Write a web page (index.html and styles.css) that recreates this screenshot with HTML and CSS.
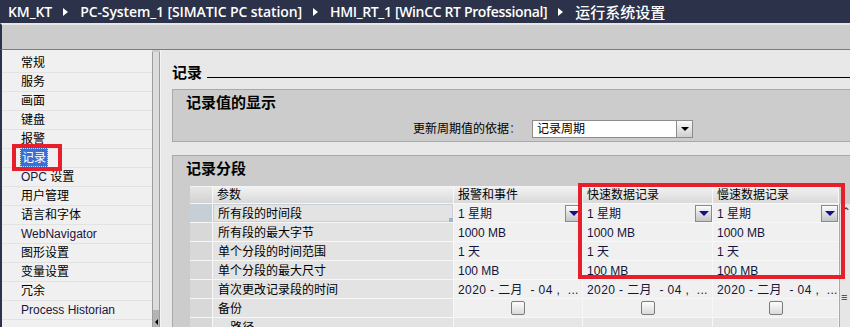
FILE: index.html
```html
<!DOCTYPE html>
<html lang="zh">
<head>
<meta charset="utf-8">
<title>运行系统设置</title>
<link rel="stylesheet" href="styles.css">
</head>
<body>
<div class="app">
  <header class="titlebar">
    <span>KM_KT</span><span class="crumb-sep"></span>
    <span>PC-System_1 [SIMATIC PC station]</span><span class="crumb-sep"></span>
    <span class="crumb-tight">HMI_RT_1 [WinCC RT Professional]</span><span class="crumb-sep"></span>
    <span class="cjk">运行系统设置</span>
  </header>
  <div class="toolbar"></div>
  <div class="workspace">
    <nav class="sidebar">
      <ul class="navlist">
        <li>常规</li>
        <li>服务</li>
        <li>画面</li>
        <li>键盘</li>
        <li>报警</li>
        <li class="selected"><span class="sel-label">记录</span></li>
        <li><span class="latin">OPC</span> 设置</li>
        <li>用户管理</li>
        <li>语言和字体</li>
        <li class="latin">WebNavigator</li>
        <li>图形设置</li>
        <li>变量设置</li>
        <li>冗余</li>
        <li class="latin">Process Historian</li>
      </ul>
    </nav>
    <div class="splitter">
      <div class="split-track"></div>
      <div class="split-thumb"><span class="split-arrow"></span></div>
    </div>
    <main class="main">
      <div class="heading">
        <h1 class="heading-title">记录</h1>
        <span class="heading-rule"></span>
      </div>

      <section class="panel panel-display">
        <h2 class="panel-title">记录值的显示</h2>
        <div class="field">
          <label class="field-label">更新周期值的依据<span class="colon">：</span></label>
          <div class="select">
            <span class="select-value">记录周期</span>
            <span class="select-btn"><span class="tri tri-black"></span></span>
          </div>
        </div>
      </section>

      <section class="panel panel-seg">
        <h2 class="panel-title">记录分段</h2>
        <div class="grid">
          <div class="hc corner"></div>
          <div class="hc">参数</div>
          <div class="hc">报警和事件</div>
          <div class="hc">快速数据记录</div>
          <div class="hc">慢速数据记录</div>
          <div class="hc-empty"></div>

          <div class="rh rh-sel"></div>
          <div class="pc focused">所有段的时间段<span class="focus-dot"></span></div>
          <div class="vc dd"><span class="val">1 星期</span><span class="dd-btn"><span class="tri tri-navy"></span></span></div>
          <div class="vc dd"><span class="val">1 星期</span><span class="dd-btn"><span class="tri tri-navy"></span></span></div>
          <div class="vc dd"><span class="val">1 星期</span><span class="dd-btn"><span class="tri tri-navy"></span></span></div>
          <div class="vscroll"><span class="vs-up">&#8963;</span><span class="vs-grip">&#8801;</span></div>

          <div class="rh"></div>
          <div class="pc">所有段的最大字节</div>
          <div class="vc">1000 MB</div>
          <div class="vc">1000 MB</div>
          <div class="vc">1000 MB</div>

          <div class="rh"></div>
          <div class="pc">单个分段的时间范围</div>
          <div class="vc">1 天</div>
          <div class="vc">1 天</div>
          <div class="vc">1 天</div>

          <div class="rh"></div>
          <div class="pc">单个分段的最大尺寸</div>
          <div class="vc">100 MB</div>
          <div class="vc">100 MB</div>
          <div class="vc">100 MB</div>

          <div class="rh"></div>
          <div class="pc">首次更改记录段的时间</div>
          <div class="vc date">2020 - 二月 &nbsp;- 04 , &nbsp;...</div>
          <div class="vc date">2020 - 二月 &nbsp;- 04 , &nbsp;...</div>
          <div class="vc date">2020 - 二月 &nbsp;- 04 , &nbsp;...</div>

          <div class="rh"></div>
          <div class="pc">备份</div>
          <div class="vc cb"><span class="checkbox"></span></div>
          <div class="vc cb"><span class="checkbox"></span></div>
          <div class="vc cb"><span class="checkbox"></span></div>

          <div class="rh"></div>
          <div class="pc sub">- 路径</div>
          <div class="vc sub-v"></div>
          <div class="vc sub-v"></div>
          <div class="vc sub-v"></div>
        </div>
      </section>
    </main>
  </div>

  <div class="mark mark-side"></div>
  <div class="mark mark-table"></div>
</div>
</body>
</html>
```

FILE: styles.css
```css
* { box-sizing: border-box; }

html, body {
  margin: 0;
  padding: 0;
}

body {
  width: 850px;
  height: 327px;
  overflow: hidden;
  background: #cccccc;
  font-family: "Liberation Sans", "Noto Sans CJK SC", sans-serif;
  font-size: 12px;
  color: #000;
}

.app {
  position: relative;
  width: 850px;
  height: 327px;
  display: flex;
  flex-direction: column;
}

/* ---------- title bar ---------- */
.titlebar {
  height: 23px;
  flex: none;
  background: #2b3249;
  color: #ffffff;
  display: flex;
  align-items: center;
  padding-left: 8px;
  font-family: "Open Sans", "Noto Sans CJK SC", sans-serif;
  font-size: 14px;
  font-weight: 600;
  letter-spacing: -0.1px;
  white-space: nowrap;
}

.titlebar .crumb-tight { letter-spacing: -0.35px; }

.titlebar .cjk {
  font-family: "Noto Sans CJK SC", sans-serif;
  font-size: 15px;
  font-weight: 500;
  letter-spacing: 0;
}

.crumb-sep {
  width: 0;
  height: 0;
  border-left: 5px solid #ffffff;
  border-top: 4px solid transparent;
  border-bottom: 4px solid transparent;
  margin: 1px 12px 0 11px;
}

.toolbar {
  height: 27px;
  flex: none;
  background: #cccccc;
  border-top: 2px solid #e6e6e6;
  border-bottom: 1px solid #7c7c7c;
  border-left: 2px solid #2b3249;
}

/* ---------- workspace ---------- */
.workspace {
  flex: 1;
  min-height: 0;
  display: flex;
  border-left: 2px solid #2b3249;
}

.sidebar {
  width: 150px;
  flex: none;
  background: #f0f0f0;
  padding-top: 4px;
}

.navlist {
  list-style: none;
  margin: 0;
  padding: 0;
}

.navlist li {
  height: 19px;
  line-height: 19px;
  padding-left: 19px;
  border-bottom: 1px solid #e2e2e2;
  white-space: nowrap;
}

.latin {
  font-family: "Liberation Sans", sans-serif;
  color: #1a1440;
}

.navlist .selected { padding-left: 18px; }

.sel-label {
  display: inline-block;
  height: 19px;
  line-height: 18px;
  padding: 0 1px 0 1px;
  margin-top: -1px;
  background: #3a6fd3;
  color: #ffffff;
  border: 1px dotted #d8d8d8;
  vertical-align: top;
}

/* splitter */
.splitter {
  width: 8px;
  flex: none;
  display: flex;
  flex-direction: column;
  border-left: 1px solid #9c9c9c;
  border-right: 1px solid #9c9c9c;
  margin-top: 2px;
}

.split-track {
  flex: 1;
  background: #dcdcdc;
}

.split-thumb {
  height: 17px;
  background: #b4b4b4;
  display: flex;
  align-items: center;
  justify-content: center;
  padding-top: 6px;
}

.split-arrow {
  width: 0;
  height: 0;
  border-right: 3px solid #000;
  border-top: 3px solid transparent;
  border-bottom: 3px solid transparent;
}

/* main */
.main {
  flex: 1;
  min-width: 0;
  overflow: hidden;
  background: #e8e8e8;
  padding-left: 11px;
  border-left: 1px solid #f4f4f4;
}

.heading {
  display: flex;
  align-items: flex-start;
  margin-top: 12px;
  height: 20px;
}

.heading-title {
  margin: 0;
  font-family: "Noto Sans CJK SC", sans-serif;
  font-size: 15px;
  font-weight: 700;
  line-height: 20px;
}

.heading-rule {
  flex: 1;
  height: 1px;
  background: #000;
  margin-left: 5px;
  margin-top: 15px;
}

.panel {
  width: 700px;
  background: #cccccc;
  border: 1px solid #a9a9a9;
  border-right: none;
}

.panel-display {
  margin-top: 7px;
  height: 53px;
}

.panel-seg {
  margin-top: 13px;
  height: 200px;
  padding-left: 17px;
}

.panel-title {
  margin: 2px 0 0 13px;
  font-family: "Noto Sans CJK SC", sans-serif;
  font-size: 15px;
  font-weight: 700;
  line-height: 20px;
}

.panel-seg .panel-title { margin-left: -4px; }

.field {
  display: flex;
  align-items: center;
  margin-top: 7px;
  padding-left: 240px;
}

.field-label {
  line-height: 18px;
  width: 119px;
  padding-top: 1px;
}

.colon { color: #2a4a9a; }

.select {
  display: flex;
  width: 161px;
  height: 18px;
  background: #ffffff;
  border: 1px solid #8c8c8c;
}

.select-value {
  flex: 1;
  padding-left: 4px;
  line-height: 16px;
}

.select-btn {
  width: 16px;
  border-left: 1px solid #8c8c8c;
  background: linear-gradient(#fafafa, #cfcfcf);
  display: flex;
  align-items: center;
  justify-content: center;
}

.tri {
  width: 0;
  height: 0;
  border-left: 4px solid transparent;
  border-right: 4px solid transparent;
  border-top: 4px solid #000;
}

.tri-navy { border-top-color: #10108a; border-left-width: 5px; border-right-width: 5px; border-top-width: 5px; }

/* ---------- grid table ---------- */
.grid {
  margin-top: 8px;
  display: grid;
  grid-template-columns: 23px 241px 129px 130px 126px 11px;
  grid-template-rows: 18px repeat(7, 19px);
}

.grid > div {
  border-right: 1px solid #f7f7f7;
  border-bottom: 1px solid #f7f7f7;
  line-height: 20px;
  white-space: nowrap;
  overflow: hidden;
}

.hc {
  background: linear-gradient(#f2f2f2, #d9d9d9);
  border-top: 1px solid #f4f4f4;
  padding-left: 4px;
  line-height: 17px !important;
}

.hc.corner { background: linear-gradient(#e6e6e6, #d2d2d2); }

.grid > .hc-empty {
  border: none;
  background: transparent;
}

.rh { background: #d8d8d8; }
.rh-sel { background: #c6ced6; }

.pc {
  background: #e3e3e3;
  padding-left: 5px;
}

.focused {
  position: relative;
  box-shadow: inset 0 0 0 1px #c8cfd6;
}

.focus-dot {
  position: absolute;
  right: 0;
  bottom: 0;
  width: 4px;
  height: 4px;
  background: #9fb4cc;
}

.vc {
  background: #f0f0f0;
  padding-left: 4px;
  color: #14143a;
}

.dd {
  display: flex;
  justify-content: space-between;
  align-items: flex-start;
  padding-right: 0;
}

.dd .val { line-height: 20px; }

.dd-btn {
  width: 17px;
  height: 17px;
  margin-top: 1px;
  border: 1px solid #8a8a8a;
  background: linear-gradient(#fbfbfb, #c4c4c4);
  display: flex;
  align-items: center;
  justify-content: center;
}

.date { letter-spacing: 0.4px; }

.cb {
  display: flex;
  align-items: center;
  justify-content: center;
  padding-left: 0;
}

.checkbox {
  width: 14px;
  height: 14px;
  border: 1px solid #7c7c7c;
  border-radius: 2px;
  background: linear-gradient(#fdfdfd, #d9d9d9);
}

.sub { padding-left: 10px; }
.sub-v { background: #e6e6e6 !important; }

.grid > .vscroll {
  grid-column: 6;
  grid-row: 2 / span 7;
  border: none;
  border-left: 1px solid #a8a8a8;
  background: #e6e6e6;
  position: relative;
  overflow: visible;
}

.vs-up {
  position: absolute;
  top: 1px;
  left: 1px;
  font-size: 12px;
  line-height: 14px;
  color: #333;
}

.vs-grip {
  position: absolute;
  top: 87px;
  left: 1px;
  font-size: 11px;
  line-height: 12px;
  color: #333;
}

/* ---------- annotation marks ---------- */
.mark {
  position: absolute;
  border: 4px solid #e61f2a;
  pointer-events: none;
}

.mark-side {
  left: 12px;
  top: 144px;
  width: 50px;
  height: 27px;
}

.mark-table {
  left: 578px;
  top: 183px;
  width: 267px;
  height: 96px;
}
```
